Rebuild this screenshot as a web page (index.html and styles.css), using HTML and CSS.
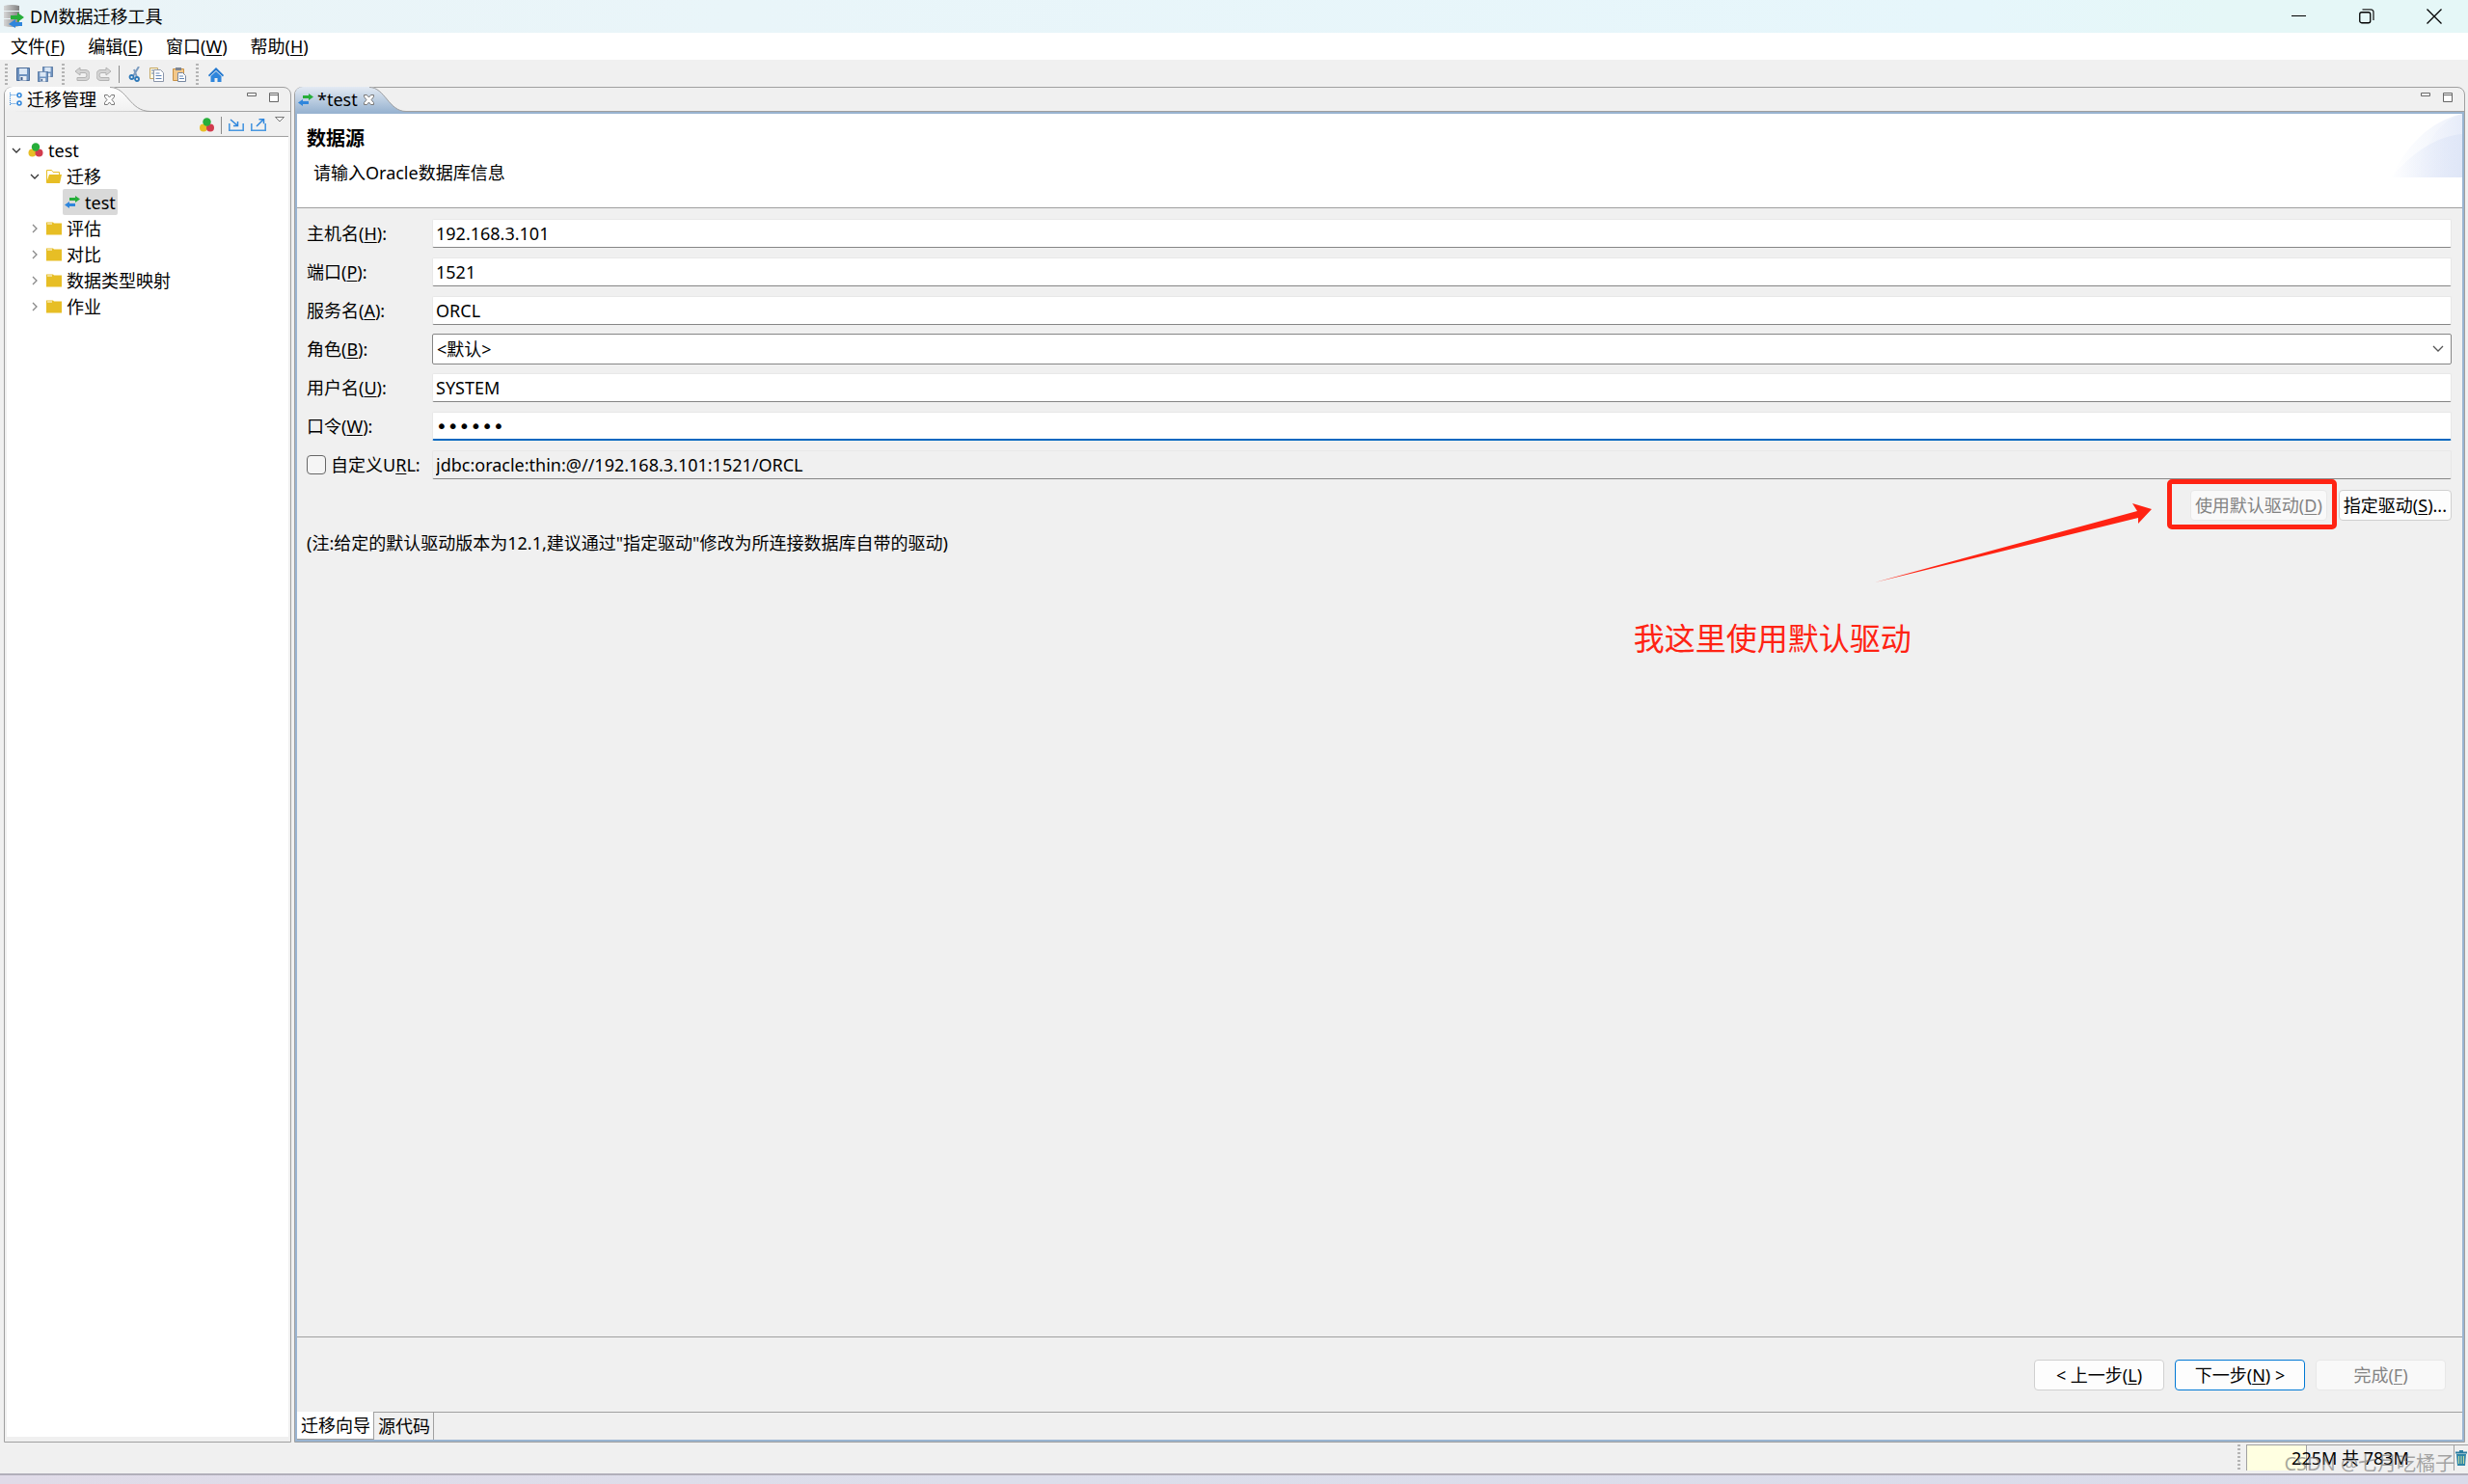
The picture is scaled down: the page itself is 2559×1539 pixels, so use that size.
FILE: index.html
```html
<!DOCTYPE html>
<html lang="zh-CN">
<head>
<meta charset="utf-8">
<title>DM数据迁移工具</title>
<link rel="stylesheet" href="styles.css">
</head>
<body>
<svg class="defs" aria-hidden="true">
  <defs>
    <linearGradient id="disk" x1="0" x2="1" y1="0" y2="0"><stop offset="0" stop-color="#d6d6d6"/><stop offset=".4" stop-color="#b5b5b5"/><stop offset="1" stop-color="#808080"/></linearGradient>
    <linearGradient id="tabIdle" x1="0" x2="0" y1="0" y2="1"><stop offset="0" stop-color="#ffffff"/><stop offset="1" stop-color="#f0f0f0"/></linearGradient>
    <linearGradient id="tabActive" x1="0" x2="0" y1="0" y2="1"><stop offset="0" stop-color="#e3eaf3"/><stop offset="1" stop-color="#99b4d1"/></linearGradient>
    <linearGradient id="swoosh" x1="0" x2="1" y1="0" y2="0"><stop offset="0" stop-color="#e6ecfa" stop-opacity="0"/><stop offset="1" stop-color="#dfe6f7"/></linearGradient>
    <symbol id="swap" viewBox="0 0 16 13"><path d="M5 2h6V0l5 3.500-5 3.500V5H5z" fill="#27ae3a"/><path d="M11 8H5V6L0 9.500 5 13v-2h6z" fill="#2f86dc"/></symbol>
    <symbol id="balls" viewBox="0 0 15 15"><circle cx="4" cy="10.500" r="4" fill="#e7be25"/><circle cx="11" cy="10.500" r="4" fill="#d23c4e"/><circle cx="7.500" cy="4.500" r="4.200" fill="#27ae3a"/></symbol>
    <symbol id="folder" viewBox="0 0 16 14"><path d="M0 1h7l1 1h8v12H0z" fill="#e7be25"/><path d="M1 2.500h5" stroke="#fff"/></symbol>
    <symbol id="folderOpen" viewBox="0 0 16 15"><path d="M.5 14V1.500h5l1.500 2h6.500V6" fill="none" stroke="#e7be25"/><path d="M3 6h13l-2 9H0z" fill="#e7be25"/></symbol>
    <symbol id="down" viewBox="0 0 10 10"><path d="M1 3l4 4 4-4" fill="none" stroke="#333" stroke-width="1.300"/></symbol>
    <symbol id="right" viewBox="0 0 10 10"><path d="M3 1l4 4-4 4" fill="none" stroke="#888" stroke-width="1.300"/></symbol>
    <symbol id="close" viewBox="0 0 11 11"><path d="M.5.5h3l2 2.500 2-2.500h3v2L8 5.500l2.500 3v2h-3l-2-2.500-2 2.500h-3v-2L3 5.500.5 2.500z" fill="#fff" stroke="#777"/></symbol>
    <symbol id="min" viewBox="0 0 10 10"><path d="M.5.5h9v3h-9z" fill="#fff" stroke="#666"/></symbol>
    <symbol id="max" viewBox="0 0 10 10"><path d="M.5.5h9v9h-9zM.5 2.500h9" fill="#fff" stroke="#666"/></symbol>
    <symbol id="floppy" viewBox="0 0 14 14"><path d="M.5.5h13v13h-13z" fill="#6f93c0" stroke="#4a6b98"/><path d="M3 1h8v6H3z" fill="#dbe7f5"/><path d="M3.500 9h7v4.500h-7z" fill="#e9eef5"/><path d="M4.500 10h2v3h-2z" fill="#3f5f8c"/></symbol>
  </defs>
</svg>

<header class="titlebar">
  <svg class="app-icon" viewBox="0 0 21 24"><path d="M0 1q8-2 16 0v5H0zM0 7h16v7H0zM0 15h16v7q-8 2-16 0z" fill="url(#disk)"/><path d="M7 11h7V8l7 5-7 5v-3H7z" fill="#27ae3a"/><path d="M19 18h-7v-3l-7 5 7 4v-2h7z" fill="#2f86dc"/></svg>
  <h1 class="title">DM数据迁移工具</h1>
  <button class="win-btn" aria-label="最小化"><svg width="16" height="16" viewBox="0 0 16 16"><path d="M0 7.500h15" stroke="#000"/></svg></button>
  <button class="win-btn" aria-label="还原"><svg width="16" height="16" viewBox="0 0 16 16"><rect x=".75" y="3.750" width="11" height="11" rx="2" fill="none" stroke="#000" stroke-width="1.300"/><path d="M3.500.8H12q3 0 3 3V12" fill="none" stroke="#222" stroke-width="1.300"/></svg></button>
  <button class="win-btn" aria-label="关闭"><svg width="16" height="16" viewBox="0 0 16 16"><path d="M.5.5l15 15M15.500.5l-15 15" stroke="#000" stroke-width="1.300"/></svg></button>
</header>

<nav class="menubar">
  <button>文件(<u>F</u>)</button>
  <button>编辑(<u>E</u>)</button>
  <button>窗口(<u>W</u>)</button>
  <button>帮助(<u>H</u>)</button>
</nav>

<div class="toolbar">
  <i class="grip"></i>
  <button aria-label="保存"><svg width="14" height="14"><use href="#floppy"/></svg></button>
  <button aria-label="全部保存"><svg width="16" height="16" viewBox="0 0 16 16"><use href="#floppy" x="5" y="0" width="11" height="11"/><use href="#floppy" x="0" y="5" width="11" height="11"/></svg></button>
  <i class="grip"></i>
  <button disabled aria-label="撤销"><svg width="16" height="16" viewBox="0 0 16 16"><path d="M6 1L1 5l5 4V6.500h5q2 0 2 2.500t-2 2.500H3v3h9q4-.5 4-5.500t-4-5.500H6z" fill="#d4d4d4" stroke="#b3b3b3"/></svg></button>
  <button disabled aria-label="重做"><svg width="16" height="16" viewBox="0 0 16 16"><path d="M10 1l5 4-5 4V6.500H5Q3 6.500 3 9t2 2.500h8v3H4Q0 14 0 9t4-5.500h6z" fill="#d4d4d4" stroke="#b3b3b3"/></svg></button>
  <i class="rule"></i>
  <button aria-label="剪切"><svg width="14" height="16" viewBox="0 0 14 16"><path d="M11 0L5 10M6 3l3 8" stroke="#7c9cc0" stroke-width="2" fill="none"/><circle cx="3.500" cy="11" r="2" fill="none" stroke="#2f79b8" stroke-width="1.800"/><circle cx="9" cy="13" r="2" fill="none" stroke="#2f79b8" stroke-width="1.800"/></svg></button>
  <button aria-label="复制"><svg width="15" height="15" viewBox="0 0 15 15"><path d="M.5.5h8v11h-8z" fill="#fff8df" stroke="#c5a865"/><path d="M4.500 2.500h7l3 3v9h-10z" fill="#fff" stroke="#8a95a8"/><path d="M2 3h2M2 6h2M6.500 6h4M6.500 8.500h6M6.500 11.500h6" stroke="#6285b5"/></svg></button>
  <button aria-label="粘贴"><svg width="14" height="16" viewBox="0 0 14 16"><path d="M.5 2.500h11v12H.5z" fill="#f3c88a" stroke="#c89145"/><path d="M3 1h6v3H3z" fill="#7d8693"/><path d="M5.500 6.500h5l3 3v6h-8z" fill="#fff" stroke="#7787a0"/><path d="M7 10h4M7 12.500h5" stroke="#6285b5"/></svg></button>
  <i class="grip"></i>
  <button aria-label="主页"><svg width="16" height="15" viewBox="0 0 16 15"><path d="M0 8l8-8 8 8-1 1.500-7-6.500-7 6.500z" fill="#2378cf"/><path d="M2.500 9L8 4l5.500 5v6h-4v-4h-3v4h-4z" fill="#2f86dc"/></svg></button>
</div>

<main class="workbench">
  <section class="pane explorer">
    <div class="tabstrip">
      <svg class="tab-shape" width="152" height="26" viewBox="0 0 152 26"><path d="M0 26V0h109c18 0 20 25 42 25.500" fill="url(#tabIdle)"/><path d="M109 .5c18 0 20 25 42 25" fill="none" stroke="#a0a0a0"/></svg>
      <svg class="tab-icon" width="13" height="14" viewBox="0 0 13 14"><path d="M.5 0v13M1 2.500h7M1 11.500h7" stroke="#2f86dc" stroke-dasharray="1 1"/><circle cx="10" cy="2.800" r="2" fill="none" stroke="#2f86dc" stroke-width="1.500"/><circle cx="10" cy="11" r="2" fill="none" stroke="#2f86dc" stroke-width="1.500"/></svg>
      <h2 class="tab-label">迁移管理</h2>
      <button class="tab-close" aria-label="关闭视图"><svg width="11" height="11"><use href="#close"/></svg></button>
      <span class="pane-tools"><button aria-label="最小化视图"><svg width="10" height="10"><use href="#min"/></svg></button><button aria-label="最大化视图"><svg width="10" height="10"><use href="#max"/></svg></button></span>
    </div>
    <div class="viewbar">
      <button aria-label="连接"><svg width="15" height="15"><use href="#balls"/></svg></button>
      <i class="rule"></i>
      <button aria-label="导入"><svg width="16" height="13" viewBox="0 0 16 13"><path d="M.8 5v7.200h14.400V5" fill="none" stroke="#4a98e0" stroke-width="1.600"/><path d="M2 1l7 6M9.500 3v4.500H5" fill="none" stroke="#2f86dc" stroke-width="1.500"/></svg></button>
      <button aria-label="导出"><svg width="16" height="13" viewBox="0 0 16 13"><path d="M.8 5v7.200h14.400V5" fill="none" stroke="#4a98e0" stroke-width="1.600"/><path d="M6 8l7-7M8.500.8h5v4.500" fill="none" stroke="#2f86dc" stroke-width="1.500"/></svg></button>
      <button class="view-menu" aria-label="视图菜单"><svg width="10" height="6" viewBox="0 0 10 6"><path d="M.5.5h9L5 5z" fill="#fff" stroke="#777"/></svg></button>
    </div>
    <ul class="tree">
      <li class="node"><svg class="twisty"><use href="#down"/></svg><svg class="glyph"><use href="#balls"/></svg><span>test</span></li>
      <li class="node level-1"><svg class="twisty"><use href="#down"/></svg><svg class="glyph"><use href="#folderOpen"/></svg><span>迁移</span></li>
      <li class="node level-2"><span class="selected"><svg class="glyph"><use href="#swap"/></svg><span>test</span></span></li>
      <li class="node level-1"><svg class="twisty"><use href="#right"/></svg><svg class="glyph"><use href="#folder"/></svg><span>评估</span></li>
      <li class="node level-1"><svg class="twisty"><use href="#right"/></svg><svg class="glyph"><use href="#folder"/></svg><span>对比</span></li>
      <li class="node level-1"><svg class="twisty"><use href="#right"/></svg><svg class="glyph"><use href="#folder"/></svg><span>数据类型映射</span></li>
      <li class="node level-1"><svg class="twisty"><use href="#right"/></svg><svg class="glyph"><use href="#folder"/></svg><span>作业</span></li>
    </ul>
  </section>

  <section class="pane editor">
    <div class="tabstrip">
      <svg class="tab-shape" width="116" height="26" viewBox="0 0 116 26"><path d="M0 26V0h77c16 0 20 25 38 25.500V26" fill="url(#tabActive)"/><path d="M77 .5c16 0 20 25 38 25" fill="none" stroke="#a0a0a0"/></svg>
      <svg class="tab-icon" width="16" height="13"><use href="#swap"/></svg>
      <h2 class="tab-label">*test</h2>
      <button class="tab-close" aria-label="关闭编辑器"><svg width="11" height="11"><use href="#close"/></svg></button>
      <span class="pane-tools"><button aria-label="最小化编辑器"><svg width="10" height="10"><use href="#min"/></svg></button><button aria-label="最大化编辑器"><svg width="10" height="10"><use href="#max"/></svg></button></span>
    </div>
    <div class="frame">
      <header class="banner">
        <div>
          <h3>数据源</h3>
          <p>请输入Oracle数据库信息</p>
        </div>
        <svg class="swoosh" width="76" height="66" viewBox="0 0 76 66"><path d="M2 66Q30 10 76 0v66z" fill="url(#swoosh)" opacity=".6"/><path d="M2 66Q38 24 76 21v45z" fill="url(#swoosh)"/><path d="M28 66Q42 10 76 0v66z" fill="url(#swoosh)" opacity=".4"/></svg>
      </header>

      <form class="form">
        <label for="host">主机名(<u>H</u>):</label><input id="host" type="text" value="192.168.3.101">
        <label for="port">端口(<u>P</u>):</label><input id="port" type="text" value="1521">
        <label for="service">服务名(<u>A</u>):</label><input id="service" type="text" value="ORCL">
        <label for="role">角色(<u>B</u>):</label>
        <select id="role"><option>&lt;默认&gt;</option></select>
        <label for="user">用户名(<u>U</u>):</label><input id="user" type="text" value="SYSTEM">
        <label for="pass">口令(<u>W</u>):</label><input id="pass" class="focused" type="password" value="dameng">
        <label class="check" for="custom"><input id="custom" type="checkbox">自定义U<u>R</u>L:</label><input id="url" type="text" readonly aria-label="URL" value="jdbc:oracle:thin:@//192.168.3.101:1521/ORCL">
        <div class="drivers">
          <span class="marked">
            <button type="button" disabled>使用默认驱动(<u>D</u>)</button>
            <svg class="arrow" width="288" height="86" viewBox="0 0 288 86"><path d="M0 83L272 9l-5-8 20 6-14 15v-6z" fill="#ff2313"/></svg>
            <span class="callout">我这里使用默认驱动</span>
          </span>
          <button type="button">指定驱动(<u>S</u>)...</button>
        </div>
        <p class="note">(注:给定的默认驱动版本为12.1,建议通过"指定驱动"修改为所连接数据库自带的驱动)</p>
      </form>

      <footer class="wizard">
        <button type="button">&lt; 上一步(<u>L</u>)</button>
        <button type="button" class="primary">下一步(<u>N</u>) &gt;</button>
        <button type="button" disabled>完成(<u>F</u>)</button>
      </footer>

      <div class="pages">
        <button type="button" class="current">迁移向导</button>
        <button type="button">源代码</button>
      </div>
    </div>
  </section>
</main>

<footer class="status">
  <i class="grip"></i>
  <div class="heap">225M 共 783M</div>
  <button aria-label="回收内存"><svg width="12" height="16" viewBox="0 0 12 16"><path d="M0 2.500h12M4 1h4" stroke="#2b7da0" stroke-width="1.800"/><path d="M1 4h10l-1 12H2z" fill="#2f86a8"/><path d="M3.500 6v8M6 6v8M8.500 6v8" stroke="#c9dca0"/></svg></button>
  <span class="watermark">CSDN @七月吃橘子</span>
</footer>
<div class="desktop"></div>
</body>
</html>
```
FILE: styles.css
```css
* { box-sizing: border-box; }

body {
  margin: 0;
  min-height: 100vh;
  display: flex;
  flex-direction: column;
  background: #f0f0f0;
  color: #000;
  font: 18px/24px "Noto Sans", "Noto Sans CJK SC", sans-serif;
}

button, input, select { font: inherit; color: inherit; }
button { padding: 0; border: 0; background: none; }
h1, h2, h3, p, ul { margin: 0; padding: 0; font-size: inherit; font-weight: inherit; }
svg { display: block; flex: none; }
u { text-underline-offset: 2px; text-decoration-thickness: 1px; }
.defs { position: absolute; width: 0; height: 0; }

.titlebar {
  height: 34px;
  display: flex;
  align-items: center;
  padding-left: 4px;
  background: linear-gradient(90deg, #eaf4f7, #e9f5f9 30%, #e6f6fb 80%, #e5f7f7 90%);
}
.app-icon { width: 21px; height: 24px; }
.title { flex: 1; padding-left: 6px; }
.win-btn { width: 70px; height: 34px; display: grid; place-items: center; }

.menubar {
  height: 28px;
  display: flex;
  align-items: center;
  gap: 24px;
  padding-left: 11px;
  background: #fff;
}

.toolbar {
  height: 28px;
  display: flex;
  align-items: center;
  padding: 2px 0 0 5px;
}
.toolbar button { width: 23px; height: 24px; display: grid; place-items: center; }
.grip {
  width: 3px;
  height: 22px;
  margin: 0 6px;
  background: repeating-linear-gradient(#b4b4b4 0 2px, transparent 2px 4px);
}
.toolbar .grip:first-child { margin: 0 4px 0 0; }
.rule { width: 1px; height: 18px; margin: 0 4px; background: #8c8c8c; }

.workbench { flex: 1; display: flex; gap: 3px; padding: 0 3px 0 4px; }
.pane {
  display: flex;
  flex-direction: column;
  border: 1px solid #a0a0a0;
  border-radius: 8px 8px 0 0;
}
.explorer { width: 298px; }
.editor { flex: 1; min-width: 0; }

.tabstrip {
  position: relative;
  height: 25px;
  display: flex;
  align-items: center;
  padding-left: 5px;
  border-bottom: 1px solid #a0a0a0;
}
.tab-shape { position: absolute; left: 0; top: -1px; border-top-left-radius: 8px; }
.tab-icon, .tab-label, .tab-close { position: relative; }
.tab-label { padding: 0 8px 0 5px; }
.editor .tab-label { padding: 0 6px 0 4px; }
.editor .tabstrip { padding-left: 3px; }
.pane-tools { display: flex; gap: 13px; margin-left: auto; padding: 0 12px 4px 0; }

.viewbar {
  height: 26px;
  display: flex;
  align-items: center;
  justify-content: flex-end;
  gap: 7px;
  margin: 0 2px;
  padding: 2px 4px 0 0;
  border-bottom: 1px solid #a0a0a0;
}
.viewbar .rule { margin: 0; }
.view-menu { align-self: flex-start; padding: 3px 0 0 2px; }

.tree { flex: 1; margin: 0 2px 5px; background: #fff; list-style: none; }
.node { height: 27px; display: flex; align-items: center; padding-left: 5px; }
.level-1 { padding-left: 24px; }
.level-2 { padding-left: 58px; }
.twisty { width: 10px; height: 10px; margin-right: 7px; }
.glyph { width: 16px; height: 15px; margin-right: 5px; }
.selected {
  height: 27px;
  display: flex;
  align-items: center;
  padding: 0 2px;
  border-radius: 2px;
  background: #d9d9d9;
}

.frame {
  flex: 1;
  display: flex;
  flex-direction: column;
  border: 2px solid #99b4d1;
}
.banner {
  height: 98px;
  display: flex;
  justify-content: space-between;
  padding-left: 10px;
  border-bottom: 1px solid #a0a0a0;
  background: #fff;
}
.banner h3 { padding-top: 14px; font-size: 20px; font-weight: bold; }
.banner p { padding: 11px 0 0 7px; }

.form {
  flex: 1;
  display: grid;
  grid-template-columns: 130px 1fr;
  grid-auto-rows: 30px;
  align-content: start;
  align-items: center;
  row-gap: 10px;
  padding: 11px 11px 0 10px;
}
.form input[type="text"], .form input[type="password"] {
  width: 100%;
  height: 30px;
  padding: 0 3px;
  border: 1px solid #e8e8e8;
  border-bottom-color: #868686;
  border-radius: 2px;
  outline: 0;
  background: #fff;
}
.form input[readonly] { background: #f0f0f0; }
.form input.focused { border-bottom: 2px solid #0067c0; font: 20px "DejaVu Sans", sans-serif; }
.form select {
  width: 100%;
  height: 32px;
  padding: 0 4px;
  border: 1px solid #868686;
  border-radius: 2px;
  appearance: none;
  background: #fff url("data:image/svg+xml,%3Csvg xmlns='http://www.w3.org/2000/svg' width='12' height='8'%3E%3Cpath d='M1 1l5 5 5-5' fill='none' stroke='%23555' stroke-width='1.300'/%3E%3C/svg%3E") no-repeat right 7px center;
}
.check { display: flex; align-items: center; white-space: nowrap; }
.check input {
  width: 20px;
  height: 20px;
  margin: 0 5px 0 0;
  appearance: none;
  border: 1px solid #666;
  border-radius: 4px;
  background: #f5f5f5;
}

.drivers {
  grid-column: 1 / -1;
  display: flex;
  justify-content: flex-end;
  gap: 12px;
  padding-top: 4px;
}
.drivers button, .wizard button {
  height: 32px;
  border: 1px solid #d0d0d0;
  border-radius: 4px;
  background: #fdfdfd;
}
.drivers button { padding: 0 4px; }
.drivers button:disabled, .wizard button:disabled {
  border-color: #e8e8e8;
  background: #f9f9f9;
  color: #838383;
}
.marked { position: relative; }
.marked::after {
  content: "";
  position: absolute;
  inset: -11px -10px -9px -24px;
  border: 5px solid #ff2313;
  border-radius: 5px;
}
.arrow { position: absolute; right: 181px; top: 13px; }
.callout {
  position: absolute;
  right: 431px;
  top: 134px;
  color: #ff2313;
  font-size: 32px;
  line-height: 40px;
  white-space: nowrap;
}
.note { grid-column: 1 / -1; padding-top: 2px; }

.wizard {
  height: 78px;
  display: flex;
  align-items: center;
  justify-content: flex-end;
  gap: 11px;
  padding-right: 17px;
  border-top: 1px solid #a0a0a0;
}
.wizard button { width: 135px; }
.wizard .primary { border-color: #0078d4; }

.pages { height: 29px; display: flex; border-top: 1px solid #a0a0a0; }
.pages button { padding: 0 3px 0 4px; border-right: 1px solid #a0a0a0; }
.pages .current { margin-top: -1px; background: #fff; border-bottom: 1px solid #a0a0a0; }

.status {
  position: relative;
  height: 34px;
  display: flex;
  justify-content: flex-end;
  padding-top: 2px;
  border-bottom: 2px solid #b1afba;
}
.status .grip { height: 26px; }
.status button { height: 27px; width: 14px; display: grid; place-items: center; border-top: 1px solid #a0a0a0; }
.heap {
  width: 216px;
  height: 27px;
  border: 1px solid #a0a0a0;
  border-bottom: 0;
  background: linear-gradient(90deg, #ffffe1 61px, #a0a0a0 61px 62px, #f0f0f0 62px);
  line-height: 26px;
  text-align: center;
}
.watermark {
  position: absolute;
  right: 14px;
  top: 10px;
  color: rgba(110, 110, 110, .6);
  font-size: 20px;
  white-space: nowrap;
}
.desktop { height: 9px; background: linear-gradient(90deg, #e0dbe8, #dcdeeb 40%, #dadbea); }
```
